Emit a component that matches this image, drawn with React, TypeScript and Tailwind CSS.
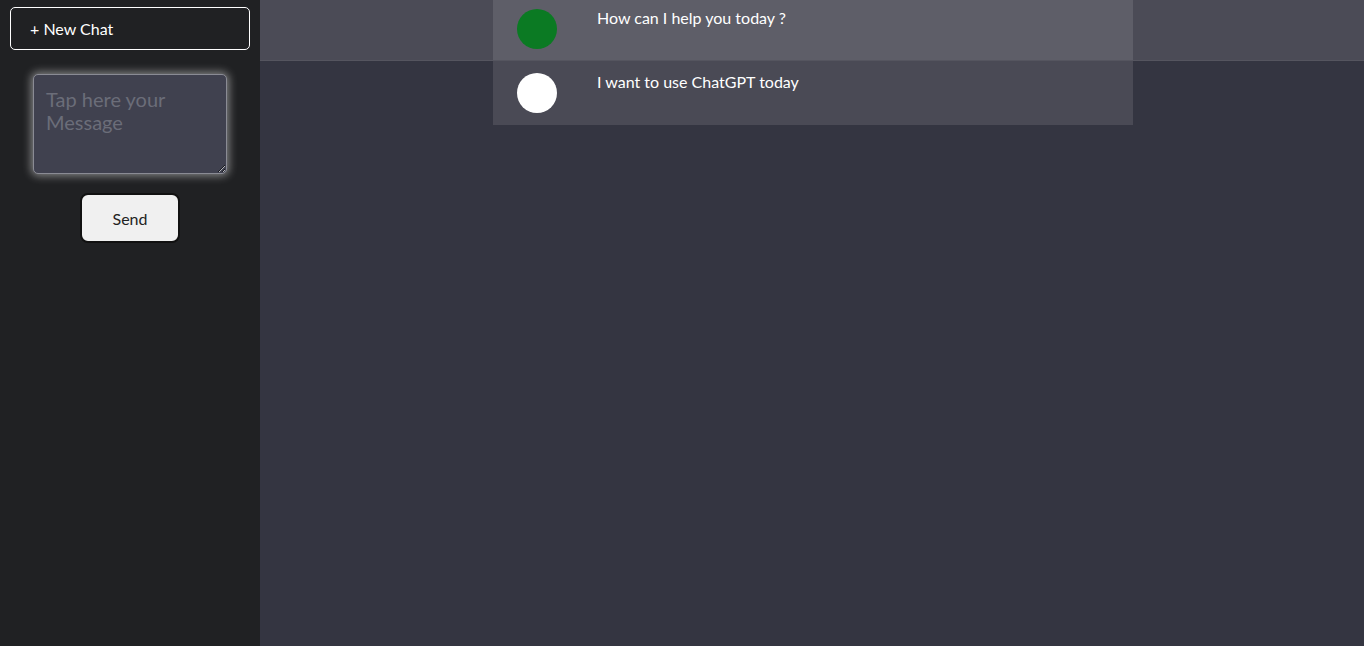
import React from "react";

const messages = [
  { id: 1, text: "How can I help you today ?", bot: true },
  { id: 2, text: "I want to use ChatGPT today", bot: false },
];

const Sidebar: React.FC = () => {
  return (
    <aside className="w-[260px] shrink-0 bg-[#202123] px-[10px] pt-[7px] flex flex-col items-center">
      <button className="w-full h-[43px] border border-white rounded-[5px] text-left pl-[19px] text-white text-[16px]">
        + New Chat
      </button>
      <textarea
        placeholder="Tap here your Message"
        className="mt-[24px] w-[194px] h-[100px] bg-[#40414f] border border-[#8a8b94] rounded-[5px] px-[12px] pt-[13px] pb-[12px] text-[20px] leading-[23px] text-white placeholder:text-[#6b6d79] shadow-[0_0_8px_2px_rgba(255,255,255,0.45)] outline-none"
      />
      <button className="mt-[19px] w-[100px] h-[50px] bg-[#f0f0f0] rounded-[8px] border-[2px] border-[#111] pt-[2px] text-[16px] text-[#222]">
        Send
      </button>
    </aside>
  );
};

const MessageRow: React.FC<{ text: string; bot: boolean }> = ({ text, bot }) => {
  return (
    <div className={"pl-[2px] " + (bot ? "bg-[#4b4b56] border-b border-[#55555f]" : "")}>
      <div
        className={
          "mx-auto w-[640px] flex items-start gap-[40px] pl-[24px] " +
          (bot ? "bg-[#5e5e68] pt-[9px] pb-[11px]" : "bg-[#4a4a55] pt-[12px] pb-[12px]")
        }
      >
        <div className={"w-[40px] h-[40px] rounded-full shrink-0 " + (bot ? "bg-[#0b7a23]" : "bg-white")} />
        <p className="text-white text-[16px] leading-[20px] -mt-[1px]">{text}</p>
      </div>
    </div>
  );
};

export default function App() {
  return (
    <div className="flex h-[646px] w-full font-['Lato',sans-serif]">
      <Sidebar />
      <main className="flex-1 bg-[#343541] flex flex-col">
        {messages.map((m) => (
          <MessageRow key={m.id} text={m.text} bot={m.bot} />
        ))}
      </main>
    </div>
  );
}
